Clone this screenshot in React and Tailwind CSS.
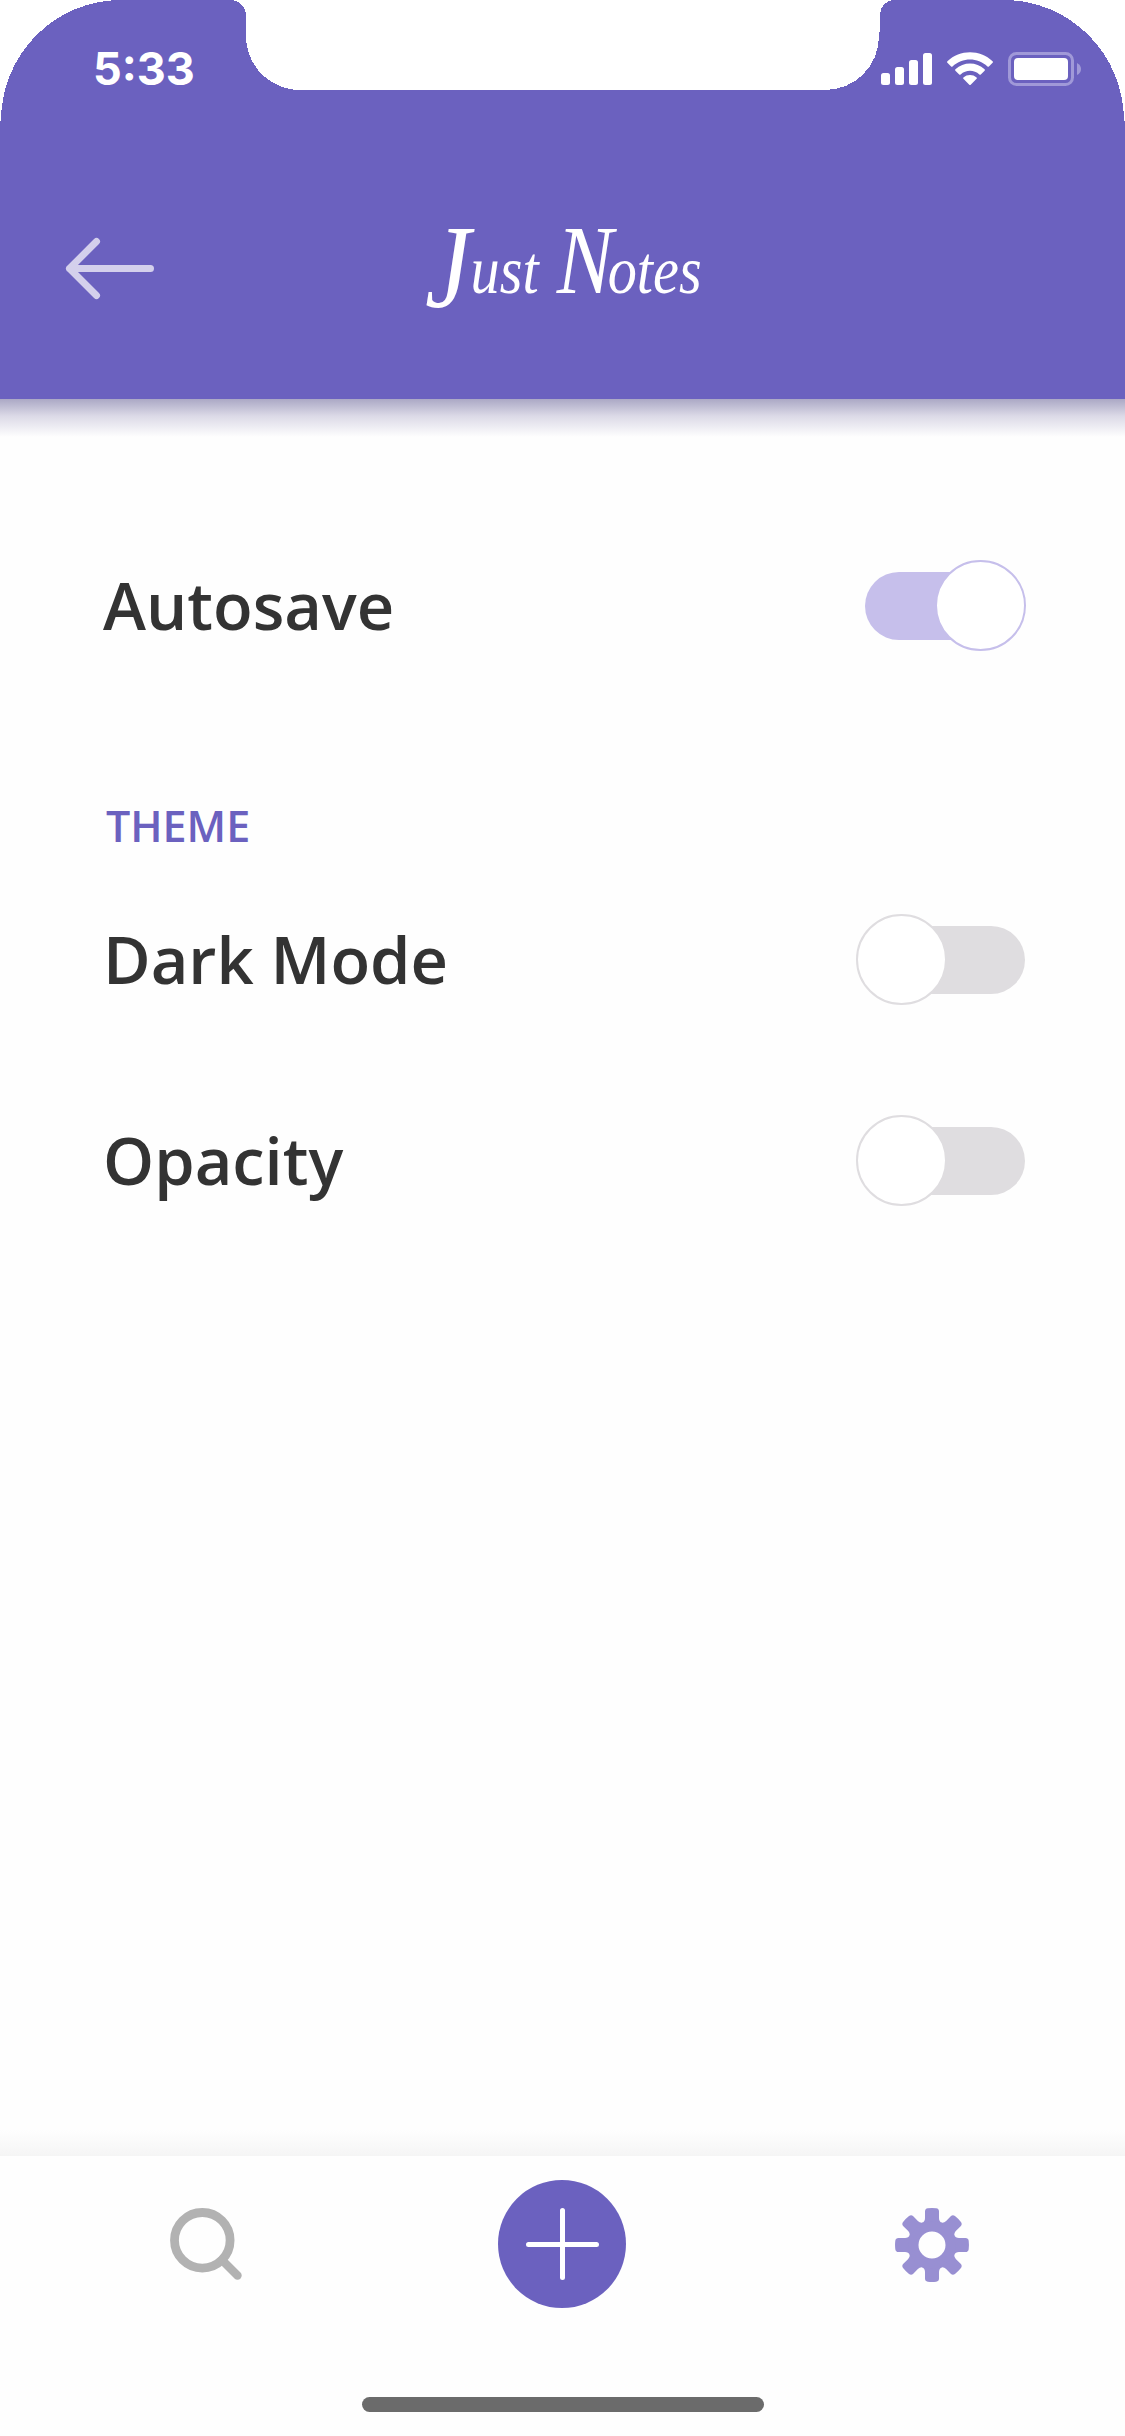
function DeviceCutout() {
  return (
    <svg className="absolute inset-x-0 top-0" width="1125" height="124" viewBox="0 0 1125 124" fill="#fff" shapeRendering="crispEdges" aria-hidden="true">
      <path d="M0 0H121A120 121 0 0 0 1 121H0Z" />
      <path d="M1125 0H1004A120 121 0 0 1 1124 121H1125Z" />
      <path d="M232 0C240 1 246 7 246 15V36C246 66 270 90 301 90H825C855 90 879 66 879 36C880 30 880 20 880 15C880 7 885 1 893 0Z" />
    </svg>
  );
}

function SignalIcon() {
  return (
    <svg width="51" height="33" viewBox="0 0 51 33" fill="#fff" aria-hidden="true">
      <rect x="0" y="20" width="9" height="12" rx="2.5" />
      <rect x="14" y="14" width="9" height="18" rx="2.5" />
      <rect x="28" y="7" width="9" height="25" rx="2.5" />
      <rect x="42" y="0" width="9" height="32" rx="2.5" />
    </svg>
  );
}

function WifiIcon() {
  return (
    <svg width="46" height="34" viewBox="0 0 46 34" fill="#fff" aria-hidden="true">
      <path d="M0.4 9.2C13 -2.8 33 -2.8 45.6 9.2Q46.3 10 45.6 10.8L41.9 14.4Q41.2 15 40.5 14.4C30.5 5.2 15.5 5.2 5.5 14.4Q4.8 15 4.1 14.4L0.4 10.8Q-0.3 10 0.4 9.2Z" />
      <path d="M8.4 17.2C16.7 9.6 29.3 9.6 37.6 17.2Q38.3 18 37.6 18.7L33.8 22.4Q33.1 23 32.4 22.4C27 17.6 19 17.6 13.6 22.4Q12.9 23 12.2 22.4L8.4 18.7Q7.7 18 8.4 17.2Z" />
      <path d="M16.4 25.4C20.2 22.1 25.8 22.1 29.6 25.4Q30.3 26 29.6 26.8L23.7 32.7Q23 33.3 22.3 32.7L16.4 26.8Q15.7 26 16.4 25.4Z" />
    </svg>
  );
}

function BatteryIcon() {
  return (
    <svg width="73" height="34" viewBox="0 0 73 34" aria-hidden="true">
      <rect x="1.5" y="1.5" width="63" height="31" rx="7" fill="none" stroke="#a099d8" strokeWidth="3" />
      <path d="M69 11Q73 13 73 17Q73 21 69 23Z" fill="#a099d8" />
      <rect x="6" y="6" width="54" height="22" rx="4" fill="#fff" />
    </svg>
  );
}

function BackIcon() {
  return (
    <svg width="90" height="64" viewBox="0 0 90 64" fill="none" stroke="#d4d0ec" strokeWidth="7" strokeLinecap="round" strokeLinejoin="round" aria-hidden="true">
      <path d="M31.5 4.5L4.5 31.5L31.5 58.5M4.5 31.5H85.5" />
    </svg>
  );
}

function Toggle({ on }) {
  return on ? (
    <span className="flex h-[91px] w-[161px] items-center rounded-full">
      <span className="h-[68px] w-[120px] rounded-l-full bg-[#c6bfeb]" />
      <span className="-ml-[50px] h-[91px] w-[91px] shrink-0 rounded-full border-2 border-[#c6bfeb] bg-white" />
    </span>
  ) : (
    <span className="mr-px flex h-[91px] w-[169px] items-center rounded-full">
      <span className="z-10 h-[91px] w-[91px] shrink-0 rounded-full border-2 border-[#dfdde0] bg-white" />
      <span className="-ml-[42px] h-[68px] w-[120px] shrink-0 rounded-r-full bg-[#dfdde0]" />
    </span>
  );
}

function SettingRow({ label, on }) {
  return (
    <div className="flex h-[91px] items-center justify-between pr-[99px] pl-[103px]">
      <span className="-mt-px text-[65px] leading-[90px] font-semibold text-[#333]">{label}</span>
      <Toggle on={on} />
    </div>
  );
}

function SearchIcon() {
  return (
    <svg width="73" height="73" viewBox="0 0 73 73" fill="none" stroke="#b2b2b2" aria-hidden="true">
      <circle cx="32.3" cy="32.3" r="27.8" strokeWidth="8.8" />
      <path d="M52 52L67.5 67.5" strokeWidth="8.4" strokeLinecap="round" />
    </svg>
  );
}

const teeth = [0, 45, 90, 135, 180, 225, 270, 315];

function GearIcon() {
  return (
    <svg width="75" height="75" viewBox="-37 -37 75 75" fill="#988fd2" aria-hidden="true">
      {teeth.map((angle) => (
        <path key={angle} transform={`rotate(${angle})`} d="M-10 -22Q-7 -23.5 -7 -27V-33.5Q-7 -36.3 -4.2 -36.7Q0 -37.2 4.2 -36.7Q7 -36.3 7 -33.5V-27Q7 -23.5 10 -22L7 -17H-7Z" />
      ))}
      <circle r="18.5" fill="none" stroke="#988fd2" strokeWidth="10" />
    </svg>
  );
}

export default function App() {
  return (
    <div className="relative flex h-[2436px] w-[1125px] flex-col overflow-hidden bg-[#fefefe] font-['Open_Sans',sans-serif]">
      <header className="relative h-[399px] shrink-0 bg-[#6b61bf]">
        <DeviceCutout />
        <div className="relative flex h-[138px] justify-between pr-[44px] pl-[93px]">
          <span className="pt-[42px] font-['Inter',sans-serif] text-[45px] leading-[54px] font-bold text-white">5:33</span>
          <div className="flex pt-[52px]">
            <span className="mt-px mr-[15px]"><SignalIcon /></span>
            <span className="mr-[15px]"><WifiIcon /></span>
            <BatteryIcon />
          </div>
        </div>
        <div className="relative flex h-[261px] items-start">
          <button className="mt-[99px] ml-[65px]" aria-label="Back"><BackIcon /></button>
          <h1 className="mt-[57px] ml-[270px] origin-left scale-x-[0.87] font-['Liberation_Serif',serif] text-[67px] leading-[120px] whitespace-nowrap text-white italic">
            <span className="relative top-[14px] text-[118px] leading-none">J</span>ust <span className="ml-[4px] text-[97px] leading-none tracking-[-6px]">N</span>otes
          </h1>
        </div>
        <div className="absolute inset-x-0 top-full h-[38px] bg-linear-to-b from-[#aba8c5] via-[#dcdae7] via-45% to-[#fefefe]" />
      </header>

      <main className="flex-1 pt-[161px]">
        <SettingRow label="Autosave" on />
        <h2 className="mt-[145px] ml-[106px] h-[60px] text-[43px] leading-[60px] font-semibold text-[#6b61bf]">THEME</h2>
        <div className="mt-[58px]">
          <SettingRow label="Dark Mode" />
        </div>
        <div className="mt-[110px]">
          <SettingRow label="Opacity" />
        </div>
      </main>

      <div className="h-[26px] bg-linear-to-b from-[#fefefe] to-[#f5f5f5]" />
      <nav className="h-[280px] bg-[#fefefe]">
        <div className="flex h-[178px] items-start">
          <button className="mt-[52px] ml-[170px]" aria-label="Search"><SearchIcon /></button>
          <button className="mt-[24px] ml-[255px] flex h-[128px] w-[128px] items-center justify-center rounded-full bg-[#6b61bf]" aria-label="New note">
            <svg width="74" height="74" viewBox="0 0 74 74" stroke="#fff" strokeWidth="5" strokeLinecap="round" aria-hidden="true">
              <path d="M37.5 3.5V70.5M3.5 37.5H71.5" />
            </svg>
          </button>
          <button className="mt-[52px] ml-[269px]" aria-label="Settings"><GearIcon /></button>
        </div>
        <div className="mt-[63px] ml-[362px] h-[15px] w-[402px] rounded-full bg-[#6b6b6b]" />
      </nav>
    </div>
  );
}
